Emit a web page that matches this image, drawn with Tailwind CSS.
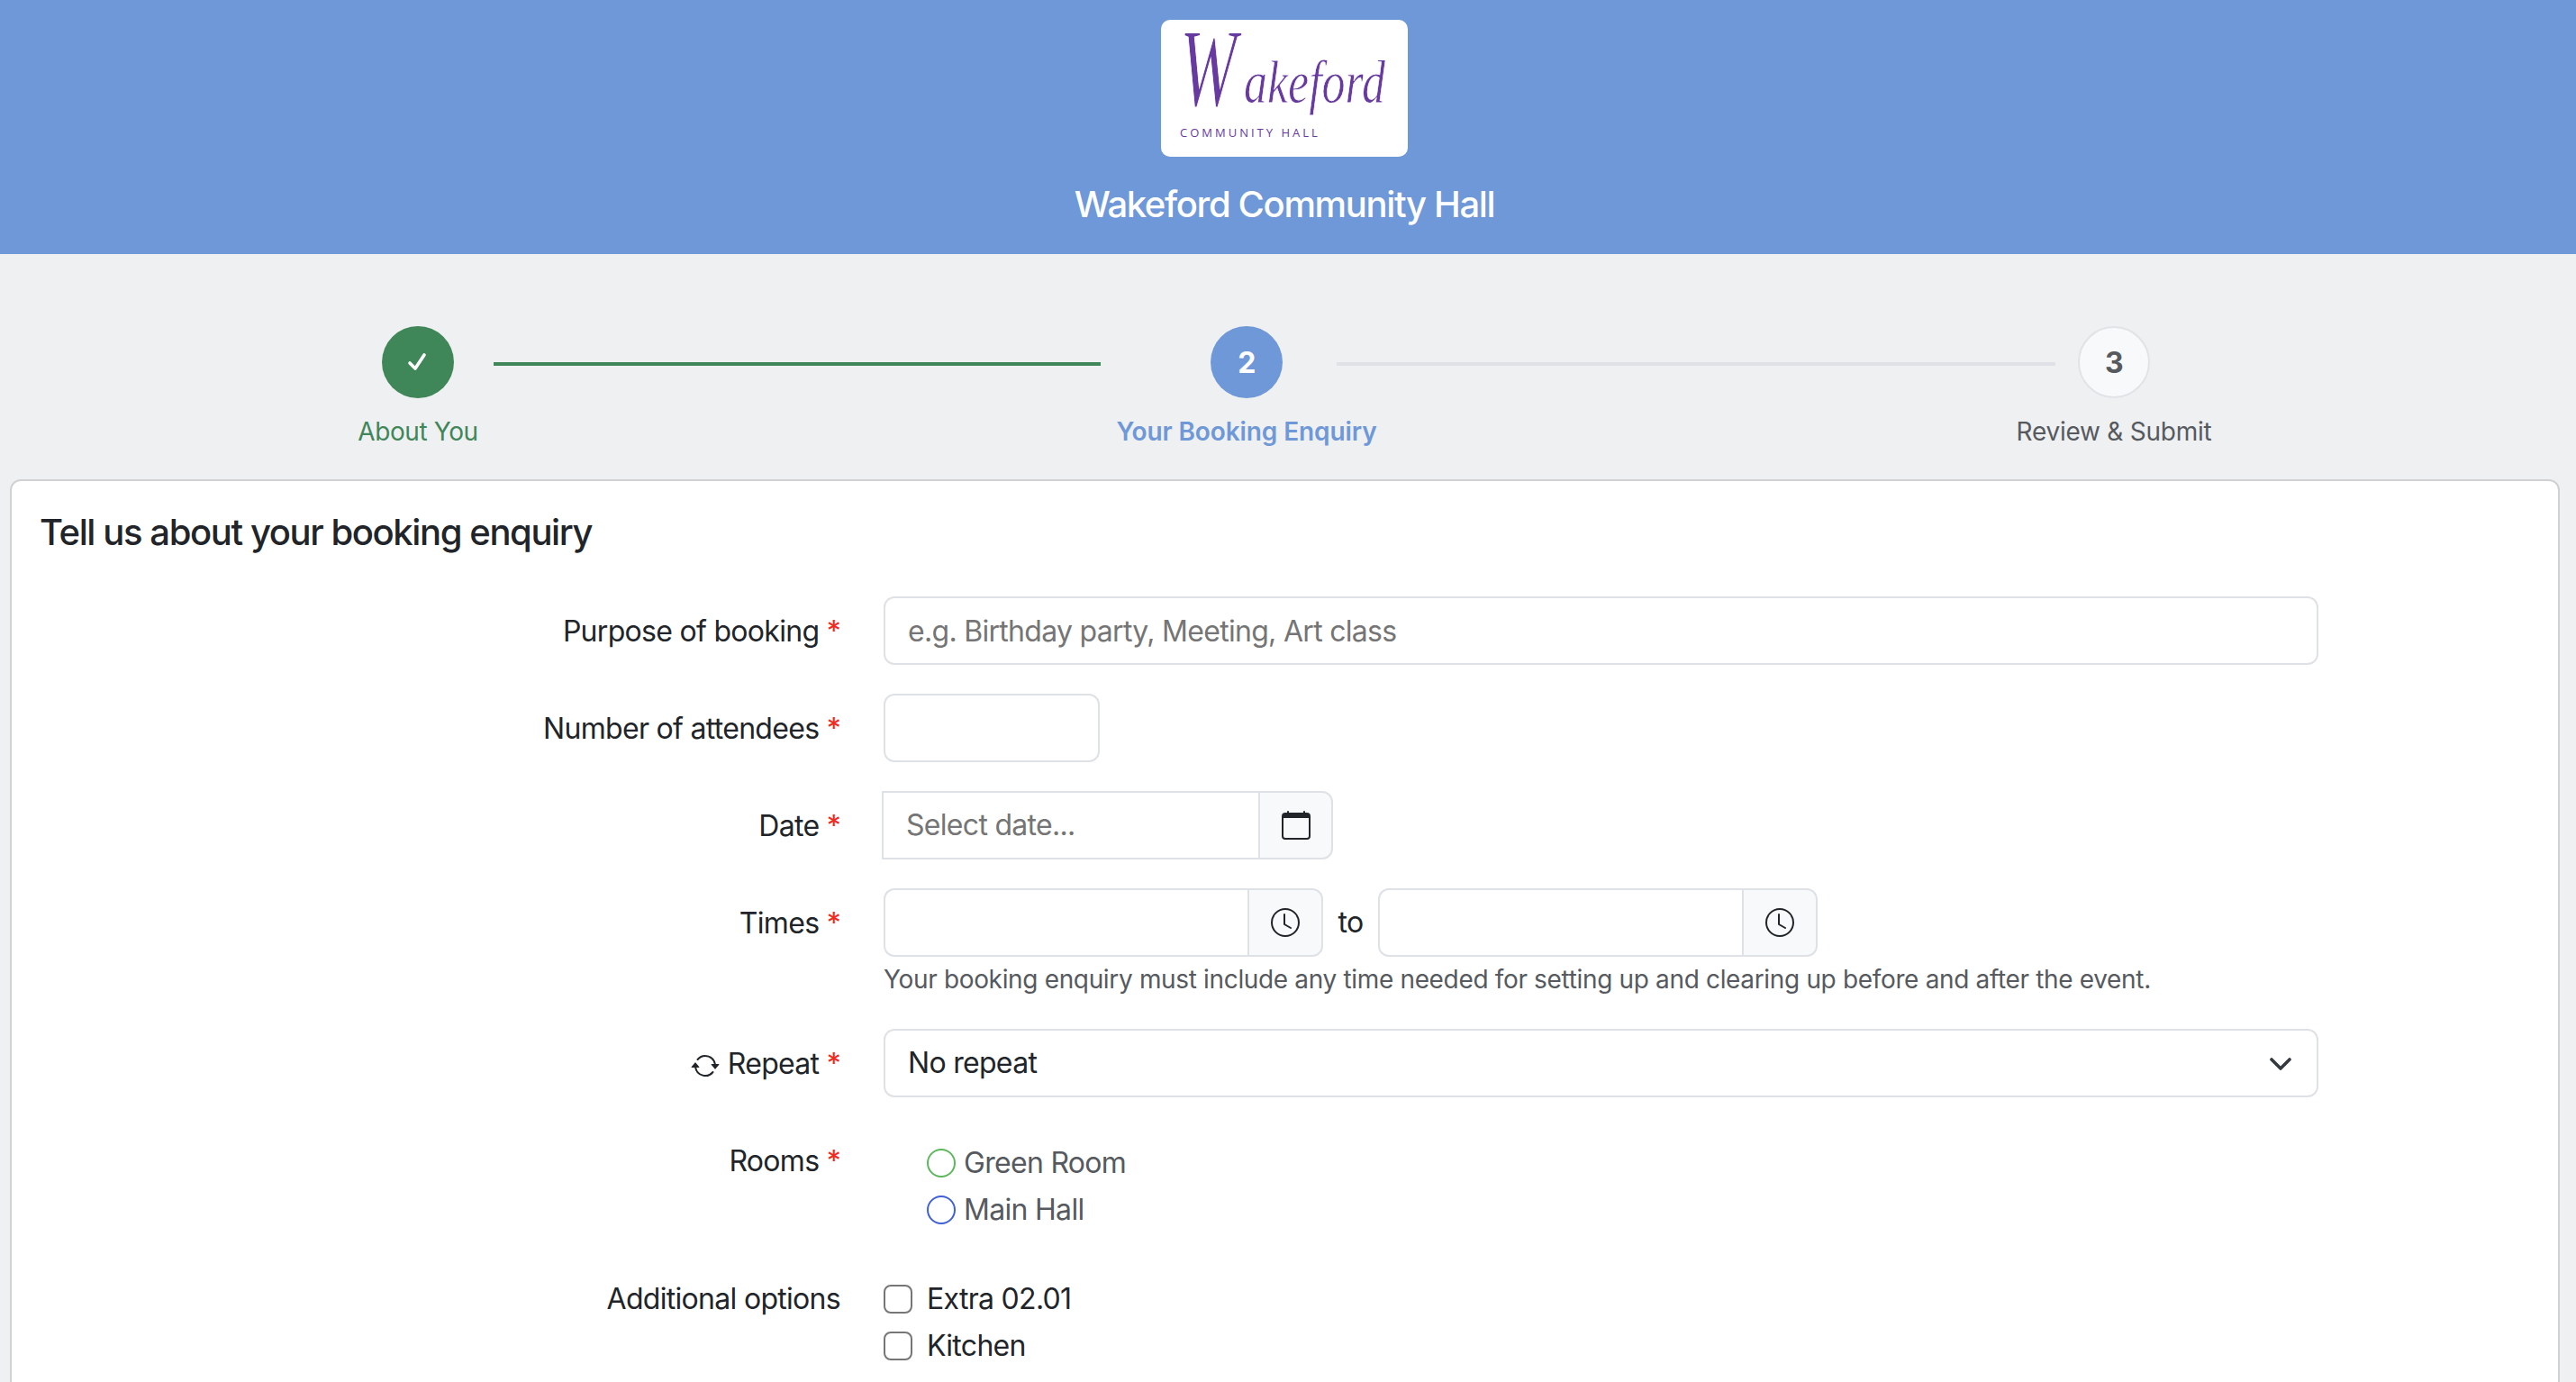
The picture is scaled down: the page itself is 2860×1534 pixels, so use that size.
<!doctype html>
<html lang="en">
<head>
<meta charset="utf-8">
<title>Wakeford Community Hall</title>
<script src="https://cdn.jsdelivr.net/npm/@tailwindcss/browser@4"></script>
</head>
<body class="h-[1534px] overflow-hidden bg-[#eff0f2] font-['Inter',sans-serif] text-[32px] leading-[48px] tracking-[-0.7px] text-[#212529]">
<header class="h-[282px] bg-[#6f98d8] pt-[22px] pr-[8px] flex flex-col items-center">
  <div class="w-[274px] h-[152px] bg-white rounded-[10px] pl-[21px] pt-[12px] text-[#663a9e] tracking-normal">
    <div class="flex items-baseline h-[94px] font-['Liberation_Serif',serif] italic [-webkit-text-stroke:1.2px_white]">
      <span class="inline-block w-[68px] text-[122px] leading-[84px] origin-bottom-left scale-x-[0.62]">W</span>
      <span class="inline-block ml-[3px] text-[52px] leading-[52px] origin-bottom-left scale-y-[1.3] [-webkit-text-stroke:0.6px_white]">akeford</span>
    </div>
    <div class="mt-[11px] text-[13px] leading-[16px] tracking-[3px] font-['Open_Sans',sans-serif]">COMMUNITY HALL</div>
  </div>
  <h1 class="mt-[29px] text-[40px] leading-[48px] font-medium tracking-[-1.35px] text-white">Wakeford Community Hall</h1>
</header>

<section class="h-[250px] pt-[80px] pl-[398px] flex items-start">
  <div class="w-[132px] flex flex-col items-center">
    <div class="w-[80px] h-[80px] rounded-full bg-[#3f8659] flex items-center justify-center">
      <svg class="w-[32px] h-[32px]" viewBox="0 0 32 32" fill="none" stroke="white" stroke-width="3.6" stroke-linecap="round" stroke-linejoin="round"><path d="M7 17l6 6L23 8"/></svg>
    </div>
    <div class="mt-[16px] text-[28px] leading-[42px] tracking-[-0.4px] text-[#3f8659] whitespace-nowrap">About You</div>
  </div>
  <div class="mt-[40px] ml-[18px] w-[674px] h-[4px] bg-[#3f8659] shrink-0"></div>
  <div class="ml-[18px] w-[288px] flex flex-col items-center">
    <div class="w-[80px] h-[80px] pt-[2px] rounded-full bg-[#6f98d8] flex items-center justify-center text-white font-bold">2</div>
    <div class="mt-[16px] text-[28px] leading-[42px] tracking-[-0.1px] font-semibold text-[#6f98d8] whitespace-nowrap">Your Booking Enquiry</div>
  </div>
  <div class="mt-[40px] ml-[-44px] w-[798px] h-[4px] bg-[#e0e1e7] shrink-0"></div>
  <div class="ml-[-44px] w-[218px] flex flex-col items-center">
    <div class="w-[80px] h-[80px] pt-[2px] rounded-full bg-[#f8f9fb] border-2 border-[#e2e3e7] flex items-center justify-center text-[#565a5f] font-bold">3</div>
    <div class="mt-[16px] text-[28px] leading-[42px] tracking-[-0.25px] text-[#565a5f] whitespace-nowrap">Review &amp; Submit</div>
  </div>
</section>

<main class="ml-[11px] mr-[18px] h-[1100px] bg-white border-2 border-[#d0d1d3] rounded-[12px] pt-[33px] pl-[31px]">
  <h2 class="text-[40px] leading-[48px] font-medium tracking-[-1.4px] mb-[47px]">Tell us about your booking enquiry</h2>
  <form class="-ml-[31px]">
    <div class="flex mb-[32px]">
      <label class="w-[920px] mr-[48px] pt-[15px] text-right">Purpose of booking <span class="text-[#f02a1c]">*</span></label>
      <input class="w-[1593px] h-[76px] px-[25px] border-2 border-[#dee2e6] rounded-[12px] placeholder:text-[#757575] outline-none" placeholder="e.g. Birthday party, Meeting, Art class">
    </div>
    <div class="flex mb-[32px]">
      <label class="w-[920px] mr-[48px] pt-[15px] text-right">Number of attendees <span class="text-[#f02a1c]">*</span></label>
      <input class="w-[240px] h-[76px] px-[25px] border-2 border-[#dee2e6] rounded-[12px] outline-none">
    </div>
    <div class="flex mb-[32px]">
      <label class="w-[920px] mr-[46px] pt-[15px] text-right">Date <span class="text-[#f02a1c]">*</span></label>
      <div class="flex h-[76px]">
        <input class="w-[418px] px-[25px] border-2 border-r-0 border-[#dee2e6] placeholder:text-[#757575] outline-none" placeholder="Select date...">
        <div class="w-[83px] flex items-center justify-center border-2 border-[#dee2e6] rounded-r-[12px] bg-[#f8f9fa]">
          <svg class="w-[32px] h-[32px]" viewBox="0 0 16 16" fill="#212529"><path d="M3.5 0a.5.5 0 0 1 .5.5V1h8V.5a.5.5 0 0 1 1 0V1h1a2 2 0 0 1 2 2v11a2 2 0 0 1-2 2H2a2 2 0 0 1-2-2V3a2 2 0 0 1 2-2h1V.5a.5.5 0 0 1 .5-.5M1 4v10a1 1 0 0 0 1 1h12a1 1 0 0 0 1-1V4z"/></svg>
        </div>
      </div>
    </div>
    <div class="flex">
      <label class="w-[920px] mr-[48px] pt-[15px] text-right">Times <span class="text-[#f02a1c]">*</span></label>
      <div class="flex items-center h-[76px]">
        <div class="flex h-[76px]">
          <input class="w-[404px] px-[25px] border-2 border-r-0 border-[#dee2e6] rounded-l-[12px] outline-none">
          <div class="w-[84px] flex items-center justify-center border-2 border-[#dee2e6] rounded-r-[12px] bg-[#f8f9fa]">
            <svg class="w-[32px] h-[32px]" viewBox="0 0 16 16" fill="#212529"><path d="M8 3.5a.5.5 0 0 0-1 0V9a.5.5 0 0 0 .252.434l3.5 2a.5.5 0 0 0 .496-.868L8 8.71z"/><path d="M8 16A8 8 0 1 0 8 0a8 8 0 0 0 0 16m7-8A7 7 0 1 1 1 8a7 7 0 0 1 14 0"/></svg>
          </div>
        </div>
        <span class="mx-[16px] w-[29px] text-center">to</span>
        <div class="flex h-[76px]">
          <input class="w-[404px] px-[25px] border-2 border-r-0 border-[#dee2e6] rounded-l-[12px] outline-none">
          <div class="w-[84px] flex items-center justify-center border-2 border-[#dee2e6] rounded-r-[12px] bg-[#f8f9fa]">
            <svg class="w-[32px] h-[32px]" viewBox="0 0 16 16" fill="#212529"><path d="M8 3.5a.5.5 0 0 0-1 0V9a.5.5 0 0 0 .252.434l3.5 2a.5.5 0 0 0 .496-.868L8 8.71z"/><path d="M8 16A8 8 0 1 0 8 0a8 8 0 0 0 0 16m7-8A7 7 0 1 1 1 8a7 7 0 0 1 14 0"/></svg>
          </div>
        </div>
      </div>
    </div>
    <p class="ml-[968px] mt-[4px] mb-[34px] text-[28px] leading-[42px] tracking-[-0.34px] text-[#565a5f]">Your booking enquiry must include any time needed for setting up and clearing up before and after the event.</p>
    <div class="flex mb-[32px]">
      <label class="w-[920px] mr-[48px] pt-[15px] flex justify-end items-center h-[63px] gap-[9px]">
        <svg class="w-[32px] h-[32px] mt-[3px]" viewBox="0 0 16 16" fill="#212529"><path d="M11.534 7h3.932a.25.25 0 0 1 .192.41l-1.966 2.36a.25.25 0 0 1-.384 0l-1.966-2.36a.25.25 0 0 1 .192-.41m-11 2h3.932a.25.25 0 0 0 .192-.41L2.692 6.23a.25.25 0 0 0-.384 0L.342 8.59A.25.25 0 0 0 .534 9"/><path d="M8 3c-1.552 0-2.94.707-3.857 1.818a.5.5 0 1 1-.771-.636A6.002 6.002 0 0 1 13.917 7H12.9A5 5 0 0 0 8 3M3.1 9a5.002 5.002 0 0 0 8.757 2.182.5.5 0 1 1 .771.636A6.002 6.002 0 0 1 2.083 9z"/></svg>
        <span>Repeat <span class="text-[#f02a1c]">*</span></span>
      </label>
      <div class="relative w-[1593px] h-[76px]">
        <select class="appearance-none w-full h-full px-[25px] border-2 border-[#dee2e6] rounded-[12px] bg-white outline-none"><option>No repeat</option></select>
        <svg class="absolute right-[26px] top-[22px] w-[32px] h-[32px] pointer-events-none" viewBox="0 0 16 16" fill="none" stroke="#343a40" stroke-width="1.8" stroke-linecap="round" stroke-linejoin="round"><path d="m3 6 5 5 5-5"/></svg>
      </div>
    </div>
    <div class="flex mb-[51px]">
      <label class="w-[920px] mr-[48px] pt-[15px] text-right">Rooms <span class="text-[#f02a1c]">*</span></label>
      <div class="pl-[48px] pt-[17px] flex flex-col gap-[4px] text-[#565a5f]">
        <label class="flex items-center h-[48px] gap-[9px]"><input type="radio" name="room" class="appearance-none w-[32px] h-[32px] rounded-full border-2 border-[#5cb85c] bg-white">Green Room</label>
        <label class="flex items-center h-[48px] gap-[9px]"><input type="radio" name="room" class="appearance-none w-[32px] h-[32px] rounded-full border-2 border-[#4060d8] bg-white">Main Hall</label>
      </div>
    </div>
    <div class="flex">
      <label class="w-[920px] mr-[48px] text-right">Additional options</label>
      <div class="flex flex-col gap-[4px]">
        <label class="flex items-center h-[48px] gap-[16px]"><input type="checkbox" class="appearance-none w-[32px] h-[32px] rounded-[8px] border-2 border-[#767676] bg-white">Extra 02.01</label>
        <label class="flex items-center h-[48px] gap-[16px]"><input type="checkbox" class="appearance-none w-[32px] h-[32px] rounded-[8px] border-2 border-[#767676] bg-white">Kitchen</label>
      </div>
    </div>
  </form>
</main>
</body>
</html>
